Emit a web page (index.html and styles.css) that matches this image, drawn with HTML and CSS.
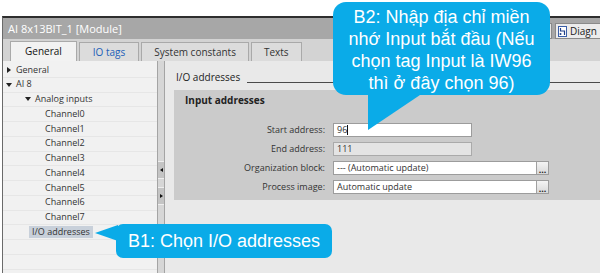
FILE: index.html
```html
<!DOCTYPE html>
<html lang="en">
<head>
  <meta charset="UTF-8" />
  <title>AI 8x13BIT_1 [Module]</title>
  <link rel="stylesheet" href="styles.css">
</head>
<body>

<div class="window">
  <div class="titlebar">
    <span class="title">AI 8x13BIT_1 [Module]</span>
    <div class="tools">
      <span class="tool-edge"></span>
      <span class="tool-btn">
        <svg width="9" height="11" viewBox="0 0 9 11">
          <rect x="0.5" y="0.5" width="8" height="10" fill="#fff" stroke="#3a5fa8"/>
          <path d="M2.5 2 v3 h4 v4" fill="none" stroke="#1f3f8a" stroke-width="1.2"/>
          <circle cx="2.5" cy="8" r="1" fill="#1f3f8a"/>
        </svg>
        Diagn
      </span>
    </div>
  </div>

  <div class="tabs">
    <div class="tab active">General</div>
    <div class="tab link">IO tags</div>
    <div class="tab">System constants</div>
    <div class="tab">Texts</div>
  </div>

  <div class="main">
    <ul class="tree">
      <li class="lvl1"><span class="tri closed"></span>General</li>
      <li class="lvl1"><span class="tri open"></span>AI 8</li>
      <li class="lvl2"><span class="tri open"></span>Analog inputs</li>
      <li class="lvl3">Channel0</li>
      <li class="lvl3">Channel1</li>
      <li class="lvl3">Channel2</li>
      <li class="lvl3">Channel3</li>
      <li class="lvl3">Channel4</li>
      <li class="lvl3">Channel5</li>
      <li class="lvl3">Channel6</li>
      <li class="lvl3">Channel7</li>
      <li class="lvl2b"><span class="selected">I/O addresses</span></li>
      <li></li>
      <li></li>
      <li></li>
    </ul>

    <div class="splitter">
      <span class="split-btn"><span class="arr left"></span></span>
      <span class="split-btn"><span class="arr right"></span></span>
    </div>

    <div class="content">
      <div class="section-head">
        <span>I/O addresses</span>
        <span class="rule"></span>
      </div>
      <div class="panel">
        <div class="panel-title">Input addresses</div>
        <div class="form">
          <label>Start address:</label>
          <div class="field short">96<span class="caret"></span></div>
          <label>End address:</label>
          <div class="field short disabled">111</div>
          <label>Organization block:</label>
          <div class="field long">--- (Automatic update)<span class="dots">...</span></div>
          <label>Process image:</label>
          <div class="field long">Automatic update<span class="dots">...</span></div>
        </div>
      </div>
    </div>
  </div>
</div>

<div class="callout b2">B2: Nhập địa chỉ miền<br>nhớ Input bắt đầu (Nếu<br>chọn tag Input là IW96<br>thì ở đây chọn 96)</div>
<div class="callout b1">B1: Chọn I/O addresses</div>

</body>
</html>
```

FILE: styles.css
```css
body {
  margin: 0;
  width: 602px;
  height: 276px;
  overflow: hidden;
  background: #fff;
  font-family: "Open Sans", "Noto Sans", sans-serif;
  color: #2b2b2b;
  position: relative;
}
.window {
  margin: 16px 2px 0 2px;
  border-top: 2px solid #2e2e2e;
  border-left: 1px solid #6a6a6a;
}
.titlebar {
  height: 21px;
  background: #a7a7a7;
  display: flex;
  justify-content: space-between;
  align-items: center;
}
.title {
  color: #fff;
  font-size: 11px;
  padding-left: 5px;
}
.tools {
  display: flex;
  align-items: center;
  align-self: flex-end;
  height: 16px;
  gap: 3px;
}
.tool-edge {
  width: 4px;
  height: 14px;
  background: #e6e6e6;
  border: 1px solid #8a8a8a;
  border-left: none;
}
.tool-btn {
  display: flex;
  align-items: center;
  gap: 3px;
  height: 14px;
  width: 42px;
  padding-left: 2px;
  overflow: hidden;
  background: #ececec;
  border: 1px solid #8a8a8a;
  border-right: none;
  font-size: 10px;
  color: #222;
  white-space: nowrap;
}
.tabs {
  height: 22px;
  background: #d3d3d3;
  display: flex;
  align-items: flex-end;
  gap: 2px;
  padding-left: 7px;
}
.tab {
  height: 18px;
  line-height: 18px;
  padding: 0 12px;
  font-size: 10px;
  color: #333;
  background: #dcdcdc;
  border: 1px solid #a9a9a9;
  border-bottom: none;
}
.tab.active {
  background: #f2f2f2;
  color: #111;
  height: 19px;
  padding: 0 14px;
}
.tab.link {
  color: #2160b8;
  padding: 0 13px;
}
.main {
  display: flex;
  height: 212px;
}
.tree {
  list-style: none;
  margin: 0;
  padding: 2px 0 0 0;
  width: 154px;
  background: #f1f1f1;
  font-size: 9px;
  color: #333;
}
.tree li {
  height: 14.75px;
  line-height: 14.75px;
  box-sizing: border-box;
  border-bottom: 1px solid #e6e6e6;
  display: flex;
  align-items: center;
}
.lvl1 { padding-left: 3px; }
.lvl2 { padding-left: 22px; }
.lvl2b { padding-left: 26px; }
.lvl3 { padding-left: 42px; }
.tri {
  width: 0;
  height: 0;
  margin-right: 4px;
}
.tri.closed {
  border-top: 3px solid transparent;
  border-bottom: 3px solid transparent;
  border-left: 4px solid #222;
  margin-left: 1px;
  margin-right: 5px;
}
.tri.open {
  border-left: 3px solid transparent;
  border-right: 3px solid transparent;
  border-top: 4px solid #222;
}
.selected {
  background: #c8d0da;
  padding: 0 3px;
  line-height: 12px;
}
.splitter {
  width: 6px;
  background: #d6d6d6;
  border-left: 1px solid #a4a4a4;
  border-right: 1px solid #a4a4a4;
  display: flex;
  flex-direction: column;
  align-items: center;
  padding-top: 100px;
  gap: 8px;
}
.split-btn {
  width: 6px;
  height: 16px;
  background: #c4c4c4;
  border-top: 1px solid #eee;
  border-bottom: 1px solid #eee;
  display: flex;
  align-items: center;
  justify-content: center;
}
.arr {
  width: 0;
  height: 0;
  border-top: 2px solid transparent;
  border-bottom: 2px solid transparent;
}
.arr.left { border-right: 3px solid #111; }
.arr.right { border-left: 3px solid #111; }
.content {
  flex: 1;
  background: #e9e9e9;
  padding: 9px 0 0 9px;
}
.section-head {
  display: flex;
  align-items: flex-end;
  height: 14px;
  margin-bottom: 6px;
  font-size: 10px;
  line-height: 14px;
  color: #222;
  padding-left: 2px;
}
.rule {
  flex: 1;
  border-bottom: 1px solid #4a4a4a;
  margin: 0 0 1px 7px;
}
.panel {
  background: #cbcbcb;
  padding: 3px 0 6px 0;
  height: 101px;
}
.panel-title {
  font-size: 10px;
  font-weight: bold;
  line-height: 14px;
  color: #222;
  padding-left: 11px;
}
.form {
  display: grid;
  grid-template-columns: 151px auto;
  column-gap: 8px;
  row-gap: 5px;
  margin-top: 16px;
  align-items: center;
}
.form label {
  text-align: right;
  font-size: 9px;
  color: #333;
  line-height: 14px;
}
.field {
  height: 14px;
  box-sizing: border-box;
  border: 1px solid #9c9c9c;
  background: #fff;
  font-size: 9px;
  line-height: 12px;
  padding-left: 3px;
  color: #333;
  display: flex;
  align-items: center;
  position: relative;
}
.field.short { width: 139px; }
.field.long { width: 216px; }
.field.disabled {
  background: #e4e4e4;
  border-color: #aaa;
}
.caret {
  width: 1px;
  height: 10px;
  background: #111;
}
.dots {
  position: absolute;
  right: 0;
  top: 0;
  bottom: 0;
  width: 11px;
  background: linear-gradient(#f4f4f4, #d8d8d8);
  border-left: 1px solid #a0a0a0;
  font-size: 9px;
  line-height: 16px;
  text-align: center;
  color: #222;
  font-weight: bold;
}
.callout {
  position: absolute;
  background: #0aabe8;
  color: #fff;
  font-family: "Liberation Sans", Arial, sans-serif;
  font-size: 18px;
  text-align: center;
}
.b2 {
  left: 333px;
  top: 2px;
  width: 217px;
  height: 93px;
  border-radius: 13px;
  line-height: 22px;
  box-sizing: border-box;
  padding-top: 4px;
}
.b2::after {
  content: "";
  position: absolute;
  left: 35px;
  top: 91px;
  width: 55px;
  height: 37px;
  background: #0aabe8;
  clip-path: polygon(0 0, 100% 0, 0 100%);
}
.b1 {
  left: 116px;
  top: 224px;
  width: 216px;
  height: 34px;
  line-height: 34px;
  border-radius: 7px;
}
.b1::before {
  content: "";
  position: absolute;
  left: -21px;
  top: 1px;
  width: 23px;
  height: 16px;
  background: #0aabe8;
  clip-path: polygon(100% 0, 0 50%, 100% 100%);
}
```
